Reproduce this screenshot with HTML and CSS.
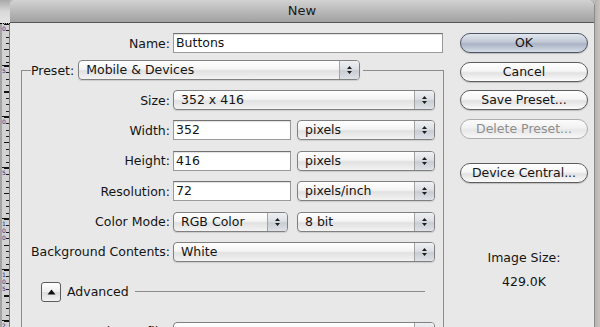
FILE: index.html
```html
<!DOCTYPE html>
<html>
<head>
<meta charset="utf-8">
<title>New</title>
<link rel="stylesheet" href="styles.css">
</head>
<body>
<div class="screen">
  <div class="ruler">
    <div class="ruler-top"></div>
    <div class="ruler-body">
      <div class="seg first"><span>0</span></div>
      <div class="seg"><span>5</span></div>
      <div class="seg"><span>0</span></div>
      <div class="seg"><span>5</span></div>
      <div class="seg"><span>1<br>0<br>0</span></div>
      <div class="seg"><span>1<br>0<br>5</span></div>
      <div class="seg"><span>2</span></div>
    </div>
  </div>

  <div class="window">
    <div class="titlebar">New</div>
    <div class="content">
      <div class="form">
        <div class="row name-row">
          <span class="lbl">Name:</span>
          <div class="input name">Buttons</div>
        </div>

        <fieldset class="group">
          <legend>
            <div class="legend-inner">
              <span>Preset:</span>
              <div class="popup preset"><span class="val">Mobile &amp; Devices</span><span class="arr"><svg width="7" height="10" viewBox="0 0 7 10"><path d="M1 4 L3.5 1 L6 4 Z M1 6 L6 6 L3.5 9 Z" fill="#1e1e1e"/></svg></span></div>
            </div>
          </legend>

          <div class="rows">
            <div class="row">
              <span class="lbl">Size:</span>
              <div class="popup full"><span class="val">352 x 416</span><span class="arr"><svg width="7" height="10" viewBox="0 0 7 10"><path d="M1 4 L3.5 1 L6 4 Z M1 6 L6 6 L3.5 9 Z" fill="#1e1e1e"/></svg></span></div>
            </div>
            <div class="row">
              <span class="lbl">Width:</span>
              <div class="input num">352</div>
              <div class="popup unit"><span class="val">pixels</span><span class="arr"><svg width="7" height="10" viewBox="0 0 7 10"><path d="M1 4 L3.5 1 L6 4 Z M1 6 L6 6 L3.5 9 Z" fill="#1e1e1e"/></svg></span></div>
            </div>
            <div class="row">
              <span class="lbl">Height:</span>
              <div class="input num">416</div>
              <div class="popup unit"><span class="val">pixels</span><span class="arr"><svg width="7" height="10" viewBox="0 0 7 10"><path d="M1 4 L3.5 1 L6 4 Z M1 6 L6 6 L3.5 9 Z" fill="#1e1e1e"/></svg></span></div>
            </div>
            <div class="row">
              <span class="lbl">Resolution:</span>
              <div class="input num">72</div>
              <div class="popup unit"><span class="val">pixels/inch</span><span class="arr"><svg width="7" height="10" viewBox="0 0 7 10"><path d="M1 4 L3.5 1 L6 4 Z M1 6 L6 6 L3.5 9 Z" fill="#1e1e1e"/></svg></span></div>
            </div>
            <div class="row">
              <span class="lbl">Color Mode:</span>
              <div class="popup mode"><span class="val">RGB Color</span><span class="arr"><svg width="7" height="10" viewBox="0 0 7 10"><path d="M1 4 L3.5 1 L6 4 Z M1 6 L6 6 L3.5 9 Z" fill="#1e1e1e"/></svg></span></div>
              <div class="popup bits"><span class="val">8 bit</span><span class="arr"><svg width="7" height="10" viewBox="0 0 7 10"><path d="M1 4 L3.5 1 L6 4 Z M1 6 L6 6 L3.5 9 Z" fill="#1e1e1e"/></svg></span></div>
            </div>
            <div class="row">
              <span class="lbl">Background Contents:</span>
              <div class="popup full"><span class="val">White</span><span class="arr"><svg width="7" height="10" viewBox="0 0 7 10"><path d="M1 4 L3.5 1 L6 4 Z M1 6 L6 6 L3.5 9 Z" fill="#1e1e1e"/></svg></span></div>
            </div>
          </div>

          <div class="adv">
            <div class="disc"><svg width="9" height="6" viewBox="0 0 9 6"><path d="M0.5 5.5 L4.5 0.5 L8.5 5.5 Z" fill="#111"/></svg></div>
            <span class="adv-label">Advanced</span>
            <div class="adv-line"></div>
          </div>

          <div class="row last">
            <span class="lbl">Color Profile:</span>
            <div class="popup full"><span class="val">sRGB IEC61966-2.1</span><span class="arr"><svg width="7" height="10" viewBox="0 0 7 10"><path d="M1 4 L3.5 1 L6 4 Z M1 6 L6 6 L3.5 9 Z" fill="#1e1e1e"/></svg></span></div>
          </div>
        </fieldset>
      </div>

      <div class="side">
        <div class="btn default">OK</div>
        <div class="btn">Cancel</div>
        <div class="btn">Save Preset...</div>
        <div class="btn disabled">Delete Preset...</div>
        <div class="btn device">Device Central...</div>
        <div class="imgsize">
          <div>Image Size:</div>
          <div>429.0K</div>
        </div>
      </div>
    </div>
  </div>
  <div class="edge"></div>
</div>
</body>
</html>
```

FILE: styles.css
```css
* { box-sizing: border-box; }
html, body { margin: 0; padding: 0; }
body {
  width: 600px;
  height: 327px;
  overflow: hidden;
  font-family: "DejaVu Sans", "Liberation Sans", sans-serif;
  font-size: 12.5px;
  color: #141414;
  background: #bdbdbd;
}
.screen { display: flex; height: 327px; }

/* ruler */
.ruler { width: 10px; flex: none; display: flex; flex-direction: column; }
.ruler-top { height: 24px; flex: none; background: linear-gradient(#a9a9a9, #d9d9d9 50%, #e4e4e4); border-bottom: 1px dotted #000; }
.ruler-body {
  flex: 1;
  background: #d2d2d2;
  border-left: 2px solid #a3a3a3;
  border-right: 1px solid #7d7d7d;
  overflow: hidden;
}
.seg {
  height: 51px;
  border-top: 1px solid #111;
  background:
    repeating-linear-gradient(#111 0 1px, transparent 1px 25.5px) right top / 5px 100% no-repeat,
    repeating-linear-gradient(#1a1a1a 0 1px, transparent 1px 6.375px) right top / 3px 100% no-repeat;
}
.seg.first { height: 41px; border-top: 0; }
.seg span {
  display: block;
  width: 5px;
  padding-top: 1px;
  font-size: 6px;
  line-height: 7px;
  color: #2b2b8c;
}

/* window */
.window {
  width: 585px;
  flex: none;
  display: flex;
  flex-direction: column;
  background: #e8e8e8;
  border-top-left-radius: 6px;
  border-top-right-radius: 6px;
  border-right: 1px solid #8a8a8a;
  overflow: hidden;
}
.titlebar {
  height: 23px;
  flex: none;
  background: linear-gradient(#d2d2d2, #b9b9b9 50%, #a2a2a2);
  border-bottom: 1px solid #575757;
  text-align: center;
  line-height: 22px;
  font-size: 13px;
  color: #1a1a1a;
}
.content { display: flex; flex: 1; padding: 10px 6px 0 0; }
.form { width: 434px; flex: none; }
.side { width: 128px; flex: none; margin-left: 16px; display: flex; flex-direction: column; }

/* rows */
.row { display: flex; align-items: center; height: 20px; }
.lbl { width: 148px; flex: none; margin-right: 3px; text-align: right; white-space: nowrap; }
.name-row .lbl { width: 160px; }

.input {
  height: 20px;
  flex: none;
  background: #fff;
  border: 1px solid #9a9a9a;
  border-top-color: #717171;
  box-shadow: inset 0 1px 1px rgba(0,0,0,0.12);
  padding-left: 2px;
  line-height: 18px;
  white-space: nowrap;
}
.input.name { width: 270px; }
.input.num { width: 118px; }

/* group box */
.group {
  margin: 7px 0 0 11px;
  padding: 10px 0 0 0;
  width: 423px;
  height: 320px;
  min-width: 0;
  border: 1px solid #8c8c8c;
  border-bottom: 0;
}
.group legend { margin-left: 9px; padding: 0 3px 0 0; }
.legend-inner { display: flex; align-items: center; gap: 4px; }
.rows { display: flex; flex-direction: column; gap: 10.4px; }

/* popups */
.popup {
  display: flex;
  flex: none;
  height: 20px;
  border: 1px solid #808080;
  border-radius: 4px;
  background: linear-gradient(#ffffff, #f4f4f4 45%, #e1e1e1 55%, #f3f3f3);
  box-shadow: 0 1px 1px rgba(0,0,0,0.12);
  overflow: hidden;
}
.popup .val { flex: 1; padding-left: 7px; line-height: 18px; white-space: nowrap; overflow: hidden; }
.popup .arr {
  width: 20px;
  flex: none;
  border-left: 1px solid #a3a3a3;
  background: linear-gradient(#eef0f3, #dcdfe4 45%, #c8cdd4 55%, #dfe2e7);
  display: flex;
  align-items: center;
  justify-content: center;
}
.popup.preset { width: 282px; }
.popup.full { width: 262px; }
.popup.unit { width: 138px; margin-left: 6px; }
.popup.mode { width: 115px; }
.popup.bits { width: 138px; margin-left: 9px; }

/* advanced disclosure */
.adv { display: flex; align-items: center; height: 20px; margin: 20px 0 0 19px; }
.disc {
  width: 20px;
  height: 20px;
  flex: none;
  border: 1px solid #5c5c5c;
  border-radius: 3px;
  background: linear-gradient(#ffffff, #efefef 50%, #dedede 51%, #f3f3f3);
  display: flex;
  align-items: center;
  justify-content: center;
}
.adv-label { margin-left: 6px; }
.adv-line { flex: none; width: 290px; height: 1px; background: #8c8c8c; margin-left: 6px; }
.row.last { margin-top: 20px; }

/* buttons */
.btn {
  height: 20px;
  flex: none;
  border: 1px solid #5e5e5e;
  border-radius: 10px;
  background: linear-gradient(#ffffff, #f5f5f5 45%, #e2e2e2 55%, #fbfbfb);
  box-shadow: 0 1px 1px rgba(0,0,0,0.18);
  text-align: center;
  line-height: 18px;
  white-space: nowrap;
}
.btn + .btn { margin-top: 8.5px; }
.btn.default {
  border-color: #4d5465;
  background: linear-gradient(#e3e8ef, #c0c8d4 45%, #a9b3c4 55%, #d6dce6);
}
.btn.disabled {
  color: #8e8e8e;
  border-color: #adadad;
  background: linear-gradient(#fcfcfc, #f1f1f1 45%, #e7e7e7 55%, #f7f7f7);
  box-shadow: none;
}
.btn.device { margin-top: 24.5px; }
.imgsize { margin-top: 63px; text-align: center; line-height: 24px; }

.edge { flex: 1; background: linear-gradient(90deg, #b7b2aa, #c9c5be); }
```
